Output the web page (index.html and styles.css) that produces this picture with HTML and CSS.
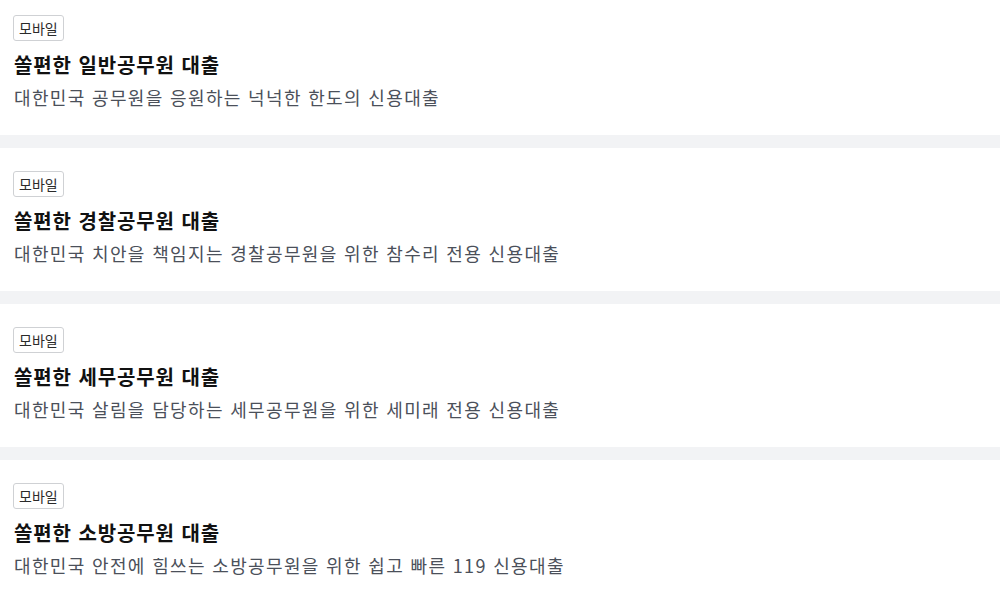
FILE: index.html
```html
<!DOCTYPE html>
<html lang="ko">
<head>
<meta charset="utf-8">
<link rel="stylesheet" href="styles.css">
</head>
<body>
<div class="list">
  <div class="card first">
    <span class="badge">모바일</span>
    <h2 class="title">쏠편한 일반공무원 대출</h2>
    <p class="desc">대한민국 공무원을 응원하는 넉넉한 한도의 신용대출</p>
  </div>
  <div class="card">
    <span class="badge">모바일</span>
    <h2 class="title">쏠편한 경찰공무원 대출</h2>
    <p class="desc">대한민국 치안을 책임지는 경찰공무원을 위한 참수리 전용 신용대출</p>
  </div>
  <div class="card">
    <span class="badge">모바일</span>
    <h2 class="title">쏠편한 세무공무원 대출</h2>
    <p class="desc">대한민국 살림을 담당하는 세무공무원을 위한 세미래 전용 신용대출</p>
  </div>
  <div class="card">
    <span class="badge">모바일</span>
    <h2 class="title">쏠편한 소방공무원 대출</h2>
    <p class="desc">대한민국 안전에 힘쓰는 소방공무원을 위한 쉽고 빠른 119 신용대출</p>
  </div>
</div>
</body>
</html>
```
FILE: styles.css
```css
html, body {
  margin: 0;
  padding: 0;
  background: #f2f3f5;
  font-family: "Noto Sans CJK KR", "Noto Sans", sans-serif;
}
.list {
  display: flex;
  flex-direction: column;
  gap: 13px;
}
.card {
  background: #fff;
  padding: 23px 14px 0 13px;
  display: flex;
  flex-direction: column;
  align-items: flex-start;
  height: 143px;
  box-sizing: border-box;
}
.card.first {
  padding-top: 15px;
  height: 135px;
}
.badge {
  display: inline-block;
  border: 1px solid #cfd1d4;
  border-radius: 3px;
  height: 26px;
  box-sizing: border-box;
  padding: 0 5px;
  font-size: 14px;
  line-height: 24px;
  color: #2a2a2a;
}
.title {
  margin: 10px 0 0 1px;
  font-size: 20px;
  font-weight: 700;
  letter-spacing: 0.9px;
  line-height: 28px;
  color: #111;
}
.desc {
  margin: 6px 0 0 1px;
  font-size: 18px;
  letter-spacing: 1.35px;
  line-height: 24px;
  color: #4b505a;
}
```
